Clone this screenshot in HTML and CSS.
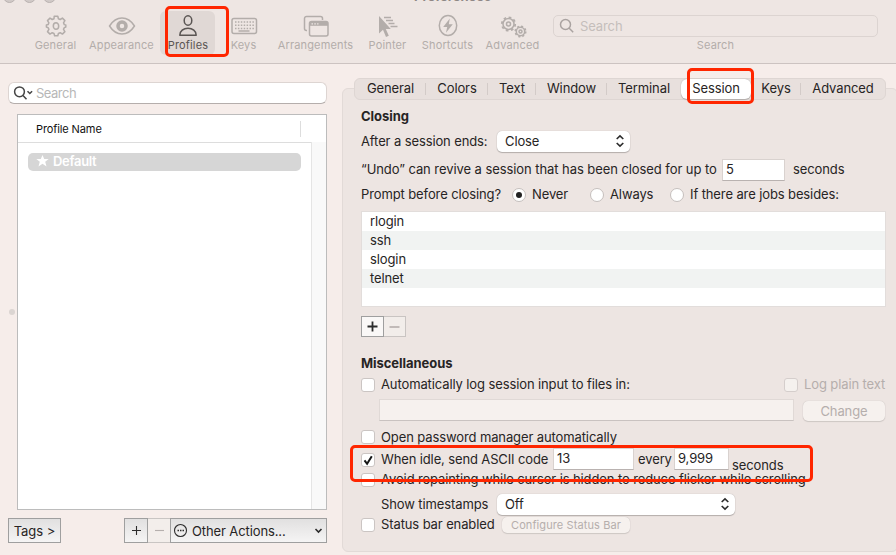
FILE: index.html
```html
<!DOCTYPE html>
<html lang="en">
<head>
<meta charset="utf-8">
<title>Preferences</title>
<link rel="stylesheet" href="styles.css">
</head>
<body>
<header class="toolbar">
  <div class="lights"><i></i><i></i><i></i></div>
  <div class="title">Preferences</div>
  <nav class="tools">
    <div class="tool"><svg width="22" height="24" viewBox="-11 -12 22 24"><path class="ln" d="M-1.8-9.8h3.6l.6 2.500 1.800.8 2.200-1.400 2.500 2.500-1.400 2.200.8 1.800 1.500.4v2l-1.500.6-.8 1.800 1.400 2.200-2.500 2.500-2.200-1.400-1.800.8-.6 2.300h-3.200l-.6-2.300-1.800-.8-2.200 1.400-2.500-2.500 1.400-2.200-.8-1.800-1.700-.6v-2l1.700-.4.8-1.800-1.400-2.200 2.500-2.500 2.200 1.400 1.800-.8z"/><ellipse class="ln" rx="2.700" ry="3.300"/></svg><span>General</span></div>
    <div class="tool"><svg width="28" height="24" viewBox="-14 -12 28 24"><path class="ln" d="M-12.5 0C-9-5.500-4.500-8 0-8S9-5.500 12.500 0C9 5.500 4.500 8 0 8S-9 5.500-12.500 0z"/><circle r="4" class="iris"/></svg><span>Appearance</span></div>
    <div class="tool active"><svg width="22" height="24" viewBox="-11 -12 22 24"><ellipse class="ln" cy="-5.500" rx="3.800" ry="4.800"/><path class="ln" d="M-8.200 9.200C-8.200 5-4.500 2.300 0 2.300S8.200 5 8.200 9.200z"/></svg><span>Profiles</span></div>
    <div class="tool"><svg width="28" height="24" viewBox="-14 -12 28 24"><rect class="ln" x="-12" y="-7.500" width="24.500" height="15" rx="2"/><path class="keys" d="M-9-4h19M-9-.7h19M-9 2.400h19"/><path class="ln" d="M-5.500 5h11"/></svg><span>Keys</span></div>
    <div class="tool"><svg width="28" height="24" viewBox="0 0 28 24"><path class="ln" d="M5 16.500H4.500a2 2 0 0 1-2-2V4.500a2 2 0 0 1 2-2h14a2 2 0 0 1 2 2V6"/><rect class="ln" x="7.500" y="7.500" width="18.500" height="14.500" rx="2"/><path class="fl" d="M8 8h18v3.800H8z"/><path class="dots" d="M9.500 9.800h7"/></svg><span>Arrangements</span></div>
    <div class="tool"><svg width="24" height="24" viewBox="0 0 24 24"><path class="fl" d="M3 2v17.500l4-3.800 3 7.300 2.800-1.200-3-6.800h5z"/><path class="ln" d="M8 3.500h7M10 6.500h7M12.500 9.500h6M14.500 12.500h7"/></svg><span>Pointer</span></div>
    <div class="tool"><svg width="22" height="24" viewBox="-11 -12 22 24"><ellipse class="ln" cy="-.5" rx="8.700" ry="10"/><path class="fl" d="M1.800-7.500-4.800 1h4L-2 6.800 4.800-1.800H.8z"/></svg><span>Shortcuts</span></div>
    <div class="tool"><svg width="28" height="24" viewBox="0 0 28 24"><g class="ln"><circle cx="9.500" cy="10" r="5.500"/><circle cx="9.500" cy="10" r="2"/><circle cx="21.500" cy="17.500" r="4.200"/><circle cx="21.500" cy="17.500" r="1.500"/></g><circle class="cog" cx="9.500" cy="10" r="6.700"/><circle class="cog small" cx="21.500" cy="17.500" r="5.300"/></svg><span>Advanced</span></div>
  </nav>
  <div class="finder">
    <div class="find"><svg width="16" height="16" viewBox="0 0 16 16"><circle class="ln" cx="6.500" cy="6.500" r="5"/><path class="ln" d="M10 10l4.200 4.200"/></svg><span>Search</span></div>
    <span class="caption">Search</span>
  </div>
  <div class="mark mark-profiles"></div>
</header>
<main>
  <aside>
    <div class="search"><svg width="22" height="16" viewBox="0 0 22 16"><circle cx="6.500" cy="6.800" r="4.900"/><path d="M10 10.500l3.500 3.800M14.500 6.200l2.300 2.300 2.300-2.300"/></svg><span>Search</span></div>
    <div class="listwrap">
      <i class="grip"></i>
      <div class="profiles">
        <div class="head"><span>Profile Name</span></div>
        <div class="body"><div class="rows"><div class="row-sel"><svg width="13" height="12" viewBox="0 0 13 12"><path d="M6.500 0l1.700 4h4.500L9.200 6.800l1.300 4.700-4-2.800-4 2.800 1.300-4.700L.3 4h4.500z"/></svg><span>Default</span></div></div><div class="gutter"></div></div>
      </div>
    </div>
    <footer>
      <div class="btn tags">Tags &gt;</div>
      <div class="btn add"><svg width="11" height="11" viewBox="0 0 11 11"><path d="M5.500 1v9M1 5.500h9"/></svg></div>
      <div class="btn remove"><svg width="11" height="11" viewBox="0 0 11 11"><path d="M1 5.500h9"/></svg></div>
      <div class="btn actions"><svg width="15" height="15" viewBox="0 0 15 15"><circle cx="7.500" cy="7.500" r="6"/><path class="ellipsis" d="M4.500 7.500h6.500"/></svg><span>Other Actions...</span><svg class="chev" width="9" height="7" viewBox="0 0 9 7"><path d="M1.500 2l3 3 3-3"/></svg></div>
    </footer>
  </aside>
  <section class="panel">
    <div class="tabs">
      <div class="tab">General</div><div class="tab">Colors</div><div class="tab">Text</div><div class="tab">Window</div><div class="tab none">Terminal</div><div class="tab on">Session</div><div class="tab">Keys</div><div class="tab none">Advanced</div>
      <div class="mark mark-session"></div>
    </div>
    <h2>Closing</h2>
    <div class="row after"><span class="lbl">After a session ends:</span><div class="select close"><span>Close</span><svg width="10" height="14" viewBox="0 0 10 14"><path d="M1.700 5L5 1.900 8.300 5M1.700 9L5 12.100 8.300 9"/></svg></div></div>
    <div class="row undo"><span class="lbl">“Undo” can revive a session that has been closed for up to</span><div class="input five">5</div><span>seconds</span></div>
    <div class="row prompt"><span class="lbl">Prompt before closing?</span><i class="radio checked"></i><span class="opt never">Never</span><i class="radio"></i><span class="opt always">Always</span><i class="radio"></i><span class="opt">If there are jobs besides:</span></div>
    <div class="jobs"><div>rlogin</div><div>ssh</div><div>slogin</div><div>telnet</div><div></div></div>
    <div class="pm"><div class="btn"><svg width="13" height="13" viewBox="0 0 13 13"><path d="M6.500 1.500v10M1.500 6.500h10"/></svg></div><div class="btn off"><svg width="13" height="13" viewBox="0 0 13 13"><path d="M1.500 7h10"/></svg></div></div>
    <h2 class="misc">Miscellaneous</h2>
    <div class="row auto"><i class="check"></i><span class="t-auto">Automatically log session input to files in:</span><i class="check dim"></i><span class="muted t-log">Log plain text</span></div>
    <div class="row path"><div class="input disabled"></div><div class="push change">Change</div></div>
    <div class="row open"><i class="check"></i><span class="t-open">Open password manager automatically</span></div>
    <div class="row idle"><i class="check"><svg width="14" height="14" viewBox="0 0 14 14"><path d="M3.500 7.300l2.600 3.500 4.700-7.600"/></svg></i><span class="lbl">When idle, send ASCII code</span><div class="input code">13</div><span class="every">every</span><div class="input num">9,999</div><span class="secs">seconds</span><div class="mark mark-idle"></div></div>
    <div class="row avoid"><i class="check"></i><span class="t-avoid">Avoid repainting while cursor is hidden to reduce flicker while scrolling</span></div>
    <div class="row stamps"><span class="lbl">Show timestamps</span><div class="select off"><span>Off</span><svg width="10" height="14" viewBox="0 0 10 14"><path d="M1.700 5L5 1.900 8.300 5M1.700 9L5 12.100 8.300 9"/></svg></div></div>
    <div class="row status"><i class="check"></i><span class="lbl">Status bar enabled</span><div class="push conf">Configure Status Bar</div></div>
  </section>
</main>
</body>
</html>
```

FILE: styles.css
```css
* { box-sizing: border-box; }
body { margin: 0; width: 896px; height: 555px; overflow: hidden; background: #f6edea; color: #272424; font: 13px/16px Inter, "Liberation Sans", sans-serif; letter-spacing: -.11px; white-space: nowrap; }
svg { flex: none; fill: none; overflow: visible; }
i { flex: none; }

.toolbar { position: relative; height: 64px; background: #eee6e3; border-bottom: 1px solid #ccc3c1; display: flex; }
.lights { position: absolute; left: 3px; top: -10px; display: flex; gap: 7px; }
.lights i { width: 13px; height: 13px; border-radius: 50%; background: #d1cac8; border: 1px solid #b9b2b0; }
.title { position: absolute; left: 414px; top: -12px; font-weight: 700; color: #8e8886; letter-spacing: 0; }
.tools { display: grid; grid-template-columns: 66px 72px 55px 56px 88px 56px 64px 66px; margin-left: 22px; padding-top: 11px; color: #b3adaa; font-size: 11px; letter-spacing: .15px; }
.tool { height: 44px; display: flex; flex-direction: column; align-items: center; padding-top: 3px; padding-left: 1px; line-height: 14px; }
.tool:nth-child(2) { padding-right: 6px; }
.tool.active { background: #e0d8d5; border-radius: 6px; color: #5a5553; }
.ln { stroke: currentColor; stroke-width: 1.500; fill: none; stroke-linejoin: round; }
.fl { fill: currentColor; }
.iris { stroke: currentColor; stroke-width: 3.500; }
.keys { stroke: currentColor; stroke-width: 1.500; stroke-dasharray: 1.500 1.400; }
.dots { stroke: #eee6e3; stroke-width: 1.300; stroke-dasharray: 1.500 1.300; }
.cog { stroke: currentColor; stroke-width: 1.800; stroke-dasharray: 2.630 2.630; }
.cog.small { stroke-width: 1.500; stroke-dasharray: 2.080 2.080; }
.finder { margin: 15px 0 0 8px; width: 325px; color: #b8b1af; display: flex; flex-direction: column; align-items: center; }
.find { width: 325px; height: 22px; border: 1px solid #dcd4d1; border-radius: 5px; display: flex; align-items: center; padding-left: 5px; gap: 5px; color: #c5bebb; }
.find svg { color: #aaa3a1; }
.caption { font-size: 11px; line-height: 14px; margin-top: 1px; color: #b3adaa; letter-spacing: .15px; }
.mark { position: absolute; border: 3px solid #ff2600; border-radius: 5px; z-index: 2; }
.mark-profiles { left: 165px; top: 6px; width: 64px; height: 51px; }

main { display: flex; height: 491px; }
aside { width: 342px; flex: none; padding: 18px 0 0 8px; }
.search { width: 319px; height: 22px; background: #fff; border: 1px solid #ddd5d2; border-bottom-color: #b5aeac; border-radius: 6px; display: flex; align-items: center; padding-left: 4px; gap: 1px; color: #b7b7b7; }
.search span { letter-spacing: -.5px; }
.search svg { stroke: #454545; stroke-width: 1.500; }
.listwrap { display: flex; align-items: center; margin-top: 10px; }
.grip { width: 6px; height: 6px; border-radius: 50%; background: #dbd5d2; margin: 0 2px 0 1px; }
.profiles { width: 310px; height: 396px; border: 1px solid #bcbcbc; background: #fff; display: flex; flex-direction: column; }
.head { height: 27px; padding-top: 1px; font-size: 11px; display: flex; align-items: center; color: #111; padding-left: 18px; }
.head span { width: 265px; border-right: 1px solid #ddd; }
.body { flex: 1; display: flex; }
.rows { flex: 1; border-top: 1px solid #ddd; padding: 10px; }
.gutter { width: 15px; background: #f9f9f9; border-left: 1px solid #e5e5e5; }
.row-sel { width: 273px; height: 18px; background: #d6d6d6; border-radius: 5px; color: #fff; font-weight: 600; display: flex; align-items: center; gap: 4px; padding-left: 8px; padding-bottom: 2px; letter-spacing: -.3px; }
.row-sel svg { fill: #fff; }
footer { display: flex; margin-top: 8px; height: 25px; }
.btn { border: 1px solid #9f9f9f; background: linear-gradient(#e1e0e0, #f5f4f4); display: flex; align-items: center; justify-content: center; }
.btn svg { stroke: #2c2c2c; stroke-width: 1.100; }
.tags { width: 53px; letter-spacing: -.05px; }
.add { width: 24px; margin-left: 63px; }
.remove { width: 23px; margin-right: -1px; border-color: #c9c5c3; border-left: 0; border-right: 0; background: #f3eeeb; }
.remove svg { stroke: #b5afad; }
.actions { width: 157px; justify-content: flex-start; padding-left: 2px; gap: 4px; }
.actions .ellipsis { stroke-width: 1.500; stroke-dasharray: 1.500 1; }
.actions .chev { margin-left: auto; margin-right: 3px; stroke-width: 1.600; }

.panel { flex: none; width: 556px; height: 464px; margin-top: 24px; border: 1px solid #e2dad7; border-radius: 6px; background: #ede5e2; padding-left: 18px; }
.tabs { position: relative; width: 532px; height: 22px; margin: -11px 0 0 -7px; border: 1px solid #ded6d3; border-radius: 6px; background: #e8e0dd; display: grid; grid-template-columns: 71px 62px 48px 71px 74px 70px 50px 1fr; }
.tab { position: relative; display: flex; align-items: center; justify-content: center; height: 20px; padding-bottom: 2px; }
.tab::after { content: ""; position: absolute; right: 0; top: 4px; height: 12px; width: 1px; background: #d3cbc8; }
.tab.none::after, .tab.on::after { display: none; }
.tab.on { background: #fff; border-radius: 6px; box-shadow: 0 0 1px #999, 0 1px 1px #b5aeac; }
.mark-session { left: 332px; top: -11px; width: 67px; height: 36px; }
h2 { margin: 6px 0 0; height: 22px; font: 700 13px/20px Inter, "Liberation Sans", sans-serif; letter-spacing: -.05px; }
.row { display: flex; align-items: center; position: relative; height: 20px; }
.row > span { padding-bottom: 2px; }
.lbl { flex: none; }
.select { height: 21px; background: #fff; border-radius: 5px; box-shadow: 0 0 1px #a8a2a0, 0 1px 1px #b5aeac; display: flex; align-items: center; justify-content: space-between; padding: 0 5px 0 8px; }
.select span { padding-bottom: 1px; }
.select svg { stroke: #2b2b2b; stroke-width: 1.600; }
.input { flex: none; height: 22px; background: #fff; border: 1px solid #d9d2cf; border-bottom-color: #b9b2b0; padding-left: 3px; line-height: 19px; }
.after { height: 26px; }
.after .lbl { width: 136px; padding-bottom: 0; }
.close { width: 133px; }
.undo { height: 31px; }
.undo .lbl { width: 361px; letter-spacing: -.07px; }
.five { width: 63px; margin-right: 8px; }
.prompt .lbl { width: 151px; }
.radio { width: 14px; height: 14px; border-radius: 50%; background: #fff; border: 1px solid #c5bfbd; margin-right: 6px; display: grid; place-items: center; }
.radio.checked::after { content: ""; width: 6px; height: 6px; border-radius: 50%; background: #222; }
.never { width: 58px; }
.always { width: 60px; }
.jobs { width: 525px; height: 96px; margin-top: 6px; border: 1px solid #e2dddb; background: #fff; }
.jobs div { height: 19px; line-height: 19px; padding-left: 8px; }
.jobs div:nth-child(even) { background: #f1f3f2; }
.pm { display: flex; height: 21px; margin-top: 9px; }
.pm .btn { width: 23px; background: #faf8f7; }
.pm .btn svg { stroke-width: 1.800; }
.pm .btn.off { width: 22px; border-color: #c9c4c2; border-left: 0; background: #f2edea; }
.pm .btn.off svg { stroke: #bbb5b3; }
.misc { margin-top: 16px; }
.check { width: 14px; height: 14px; background: #fff; border-radius: 3px; border: 1px solid #cbc5c3; margin-right: 6px; margin-top: -1px; }
.check svg { display: block; margin: -1px; stroke: #161616; stroke-width: 2; }
.check.dim { background: #f5f1ee; border-color: #d5cecc; }
.muted { color: #b5aeac; }
.t-auto { width: 403px; }
.path { height: 30px; padding-left: 18px; }
.disabled { width: 415px; background: #f6f1ee; border-color: #e0d9d6; border-bottom-color: #c9c2c0; margin-right: 9px; }
.push { display: flex; align-items: center; justify-content: center; background: #f6f1ee; border-radius: 5px; box-shadow: 0 0 1px #bbb4b2, 0 1px 1px #d0c9c6; color: #b5aeac; padding-bottom: 1px; }
.change { width: 82px; height: 20px; margin-top: 2px; }
.open { height: 25px; }
.idle .lbl { width: 172px; letter-spacing: -.13px; }
.code { width: 81px; margin: -3px 4px 0 0; }
.every { width: 36px; }
.num { width: 55px; margin: -3px 3px 0 0; }
.secs { margin-top: 11px; }
.mark-idle { left: -11px; top: -5px; width: 463px; height: 37px; }
.stamps { height: 28px; padding-left: 20px; }
.stamps .lbl { width: 116px; padding-bottom: 1px; }
.select.off { width: 238px; }
.status { height: 14px; }
.status .lbl { width: 121px; }
.conf { width: 128px; height: 16px; padding-bottom: 0; font-size: 11px; letter-spacing: .1px; }
```
